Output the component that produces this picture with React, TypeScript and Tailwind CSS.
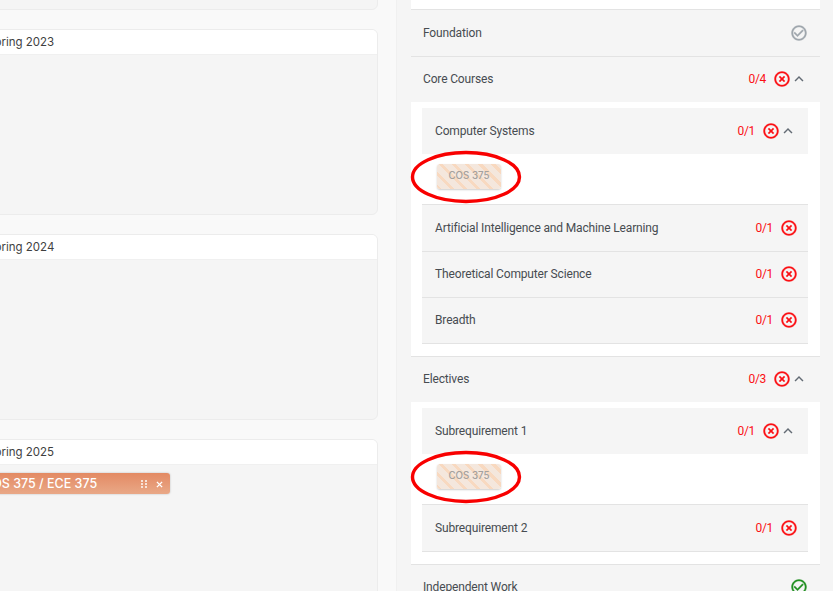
const RED = "text-[#fb0f14]";

const PATH_CANCEL =
  "M14.59 8 12 10.59 9.41 8 8 9.41 10.59 12 8 14.59 9.41 16 12 13.41 14.59 16 16 14.59 13.41 12 16 9.41 14.59 8zM12 2C6.47 2 2 6.47 2 12s4.47 10 10 10 10-4.47 10-10S17.53 2 12 2zm0 18c-4.41 0-8-3.59-8-8s3.59-8 8-8 8 3.59 8 8-3.59 8-8 8z";
const PATH_CHECK =
  "M16.59 7.58 10 14.17l-3.59-3.58L5 12l5 5 8-8zM12 2C6.48 2 2 6.48 2 12s4.48 10 10 10 10-4.48 10-10S17.52 2 12 2zm0 18c-4.42 0-8-3.58-8-8s3.58-8 8-8 8 3.58 8 8-3.58 8-8 8z";

function Icon({ d, className }: { d: string; className: string }) {
  return (
    <svg viewBox="0 0 24 24" className={`w-[18px] h-[18px] shrink-0 fill-current stroke-current stroke-[0.5] ${className}`}>
      <path d={d} />
    </svg>
  );
}

function Chevron() {
  return (
    <svg viewBox="0 0 24 24" className="w-[18px] h-[18px] shrink-0 fill-current text-[#636b74] -ml-[1px]">
      <path d="M7.41 15.41 12 10.83l4.59 4.58L18 14l-6-6-6 6z" />
    </svg>
  );
}

function Count({ value, open }: { value: string; open?: boolean }) {
  return (
    <div className="flex items-center">
      <span className={`text-[12px] tracking-[-0.3px] ${RED} mr-[7px]`}>{value}</span>
      <Icon d={PATH_CANCEL} className={RED} />
      {open && <Chevron />}
    </div>
  );
}

function Row({
  label,
  value,
  open,
  nested,
  top,
}: {
  label: string;
  value: string;
  open?: boolean;
  nested?: boolean;
  top?: boolean;
}) {
  return (
    <div
      className={`h-[46px] flex items-center justify-between bg-[#f5f5f5] border-[#e3e3e3] ${
        top ? "border-t pb-[1px]" : ""
      } ${nested ? `pl-[13px] ${open ? "pr-[11px]" : "pr-[10px]"}` : "pl-[12px] pr-[12px]"}`}
    >
      <span className="text-[12px] tracking-[-0.15px] text-[#474c51]">{label}</span>
      <Count value={value} open={open} />
    </div>
  );
}

function Chip() {
  return (
    <div className="relative h-[51px] bg-white border-b border-[#e3e3e3] pt-[10px] pl-[15px]">
      <div className="w-[64px] h-[25px] pb-[1px] rounded-[3px] shadow-[0_1px_2px_rgba(0,0,0,0.2)] flex items-center justify-center text-[9.75px] font-medium text-[#a5a19d] font-['Inter',sans-serif] bg-[repeating-linear-gradient(45deg,#f8d9c0_0,#f8d9c0_3.5px,#f4e7dd_3.5px,#f4e7dd_9.2px)]">
        COS 375
      </div>
      {/* red hand-drawn marker around the course */}
      <svg viewBox="0 0 112 54" className="absolute -left-[12px] -top-[4px] w-[112px] h-[54px] overflow-visible">
        <ellipse cx="56" cy="27" rx="53.5" ry="24.5" fill="none" stroke="#f80000" strokeWidth="3.4" />
      </svg>
    </div>
  );
}

function Card({ title, first, children }: { title: string; first?: boolean; children?: React.ReactNode }) {
  return (
    <div
      className={`-ml-[16px] w-[394px] h-[186px] shrink-0 rounded-[6px] border border-[#ececec] bg-[#f5f5f5] overflow-hidden ${
        first ? "-mt-[176px]" : ""
      }`}
    >
      <div className="h-[25px] pt-[1px] bg-white border-b border-[#f0f0f0] pl-[2px] flex items-center text-[11.5px] text-[#3f3f3f] font-['Inter',sans-serif]">
        {title}
      </div>
      {children}
    </div>
  );
}

export default function App() {
  return (
    <div className="w-[833px] h-[591px] overflow-hidden flex font-['Roboto',sans-serif]">
      {/* semester cards */}
      <div className="w-[397px] shrink-0 h-full bg-[#f9f9f9] border-r border-[#f0f0f0] flex flex-col gap-[19px] overflow-hidden">
        <Card title="" first />
        <Card title="Spring 2023" />
        <Card title="Spring 2024" />
        <Card title="Spring 2025">
          <div className="mt-[8px] w-[185px] h-[21px] pt-[1px] rounded-[3px] bg-gradient-to-b from-[#e38a63] to-[#e9a887] shadow-[0_0_2px_rgba(0,0,0,0.25)] flex items-center text-white text-[12.5px] font-medium font-['Inter',sans-serif]">
            <span className="-ml-[2px] whitespace-nowrap">COS 375 / ECE 375</span>
            <div className="ml-auto flex items-center gap-[9px] pr-[7px]">
              <svg viewBox="0 0 6 8" className="w-[6px] h-[8px] fill-[#f8e3d8]">
                <rect x="0" y="0" width="2" height="2" />
                <rect x="4" y="0" width="2" height="2" />
                <rect x="0" y="3" width="2" height="2" />
                <rect x="4" y="3" width="2" height="2" />
                <rect x="0" y="6" width="2" height="2" />
                <rect x="4" y="6" width="2" height="2" />
              </svg>
              <svg viewBox="0 0 8 8" className="w-[7px] h-[7px] stroke-white" strokeWidth="1.6">
                <path d="M1 1l6 6M7 1l-6 6" />
              </svg>
            </div>
          </div>
        </Card>
      </div>

      {/* requirements tree */}
      <div className="flex-1 min-w-0 h-full bg-[#f5f5f5] pl-[14px] pr-[13px] overflow-hidden">
        <div className="h-[9px] bg-white" />
        <div className="h-[47px] border-t border-[#e3e3e3] flex items-center justify-between pl-[12px] pr-[12px]">
          <span className="text-[12px] tracking-[-0.15px] text-[#474c51]">Foundation</span>
          <Icon d={PATH_CHECK} className="text-[#9fa6ad]" />
        </div>

        <Row label="Core Courses" value="0/4" open top />
        <div className="bg-white pt-[6px] pb-[12px] pl-[11px] pr-[12px]">
          <Row label="Computer Systems" value="0/1" open nested />
          <Chip />
          <Row label="Artificial Intelligence and Machine Learning" value="0/1" nested />
          <Row label="Theoretical Computer Science" value="0/1" nested top />
          <div className="border-b border-[#e3e3e3]">
            <Row label="Breadth" value="0/1" nested top />
          </div>
        </div>

        <Row label="Electives" value="0/3" open top />
        <div className="bg-white pt-[6px] pb-[12px] pl-[11px] pr-[12px]">
          <Row label="Subrequirement 1" value="0/1" open nested />
          <Chip />
          <div className="border-b border-[#e3e3e3]">
            <Row label="Subrequirement 2" value="0/1" nested />
          </div>
        </div>

        <div className="h-[46px] pb-[1px] border-t border-[#e3e3e3] flex items-center justify-between pl-[12px] pr-[12px]">
          <span className="text-[12px] tracking-[-0.15px] text-[#474c51]">Independent Work</span>
          <Icon d={PATH_CHECK} className="text-[#1f8f1f]" />
        </div>
      </div>
    </div>
  );
}
